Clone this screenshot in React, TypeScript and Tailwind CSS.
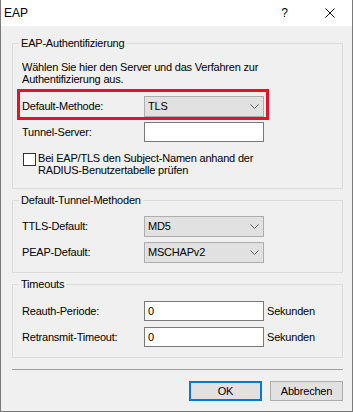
import React from 'react';

const Chevron = () => (
  <svg width="9" height="5" viewBox="0 0 9 5" className="shrink-0">
    <path d="M0.5 0.5 L4.5 4.5 L8.5 0.5" fill="none" stroke="#5a5a5a" strokeWidth="1" />
  </svg>
);

const Combo = ({ value }: { value: string }) => (
  <div className="flex h-[21px] w-[120px] items-center justify-between border border-[#adadad] bg-[#e1e1e1] pl-[3px] pr-[4px]">
    <span>{value}</span>
    <Chevron />
  </div>
);

const Input = ({ value = '' }: { value?: string }) => (
  <div className="flex h-[20px] w-[120px] items-center border border-[#7a7a7a] bg-white pl-[3px]">{value}</div>
);

const Group = ({ title, className, children }: { title: string; className?: string; children: React.ReactNode }) => (
  <fieldset className={`border border-[#dcdcdc] ${className ?? ''}`}>
    <legend className="ml-[6px] px-[2px] leading-[14px]">{title}</legend>
    {children}
  </fieldset>
);

const Row = ({ label, children }: { label: string; children: React.ReactNode }) => (
  <div className="flex items-center">
    <span className="w-[122px] shrink-0">{label}</span>
    {children}
  </div>
);

export default function App() {
  return (
    <div className="flex h-[412px] w-[353px] flex-col border-x border-b border-[#7a7a7a] bg-[#f0f0f0] font-['Liberation_Sans',Arial,sans-serif] text-[11px] tracking-[-0.2px] text-black">
      {/* Title bar */}
      <div className="flex h-[26px] shrink-0 items-center bg-white">
        <span className="pl-[3px] text-[12px] tracking-normal">EAP</span>
        <div className="flex-1" />
        <span className="w-[45px] text-center text-[12px]">?</span>
        <div className="flex w-[45px] items-center justify-center">
          <svg width="10" height="10" viewBox="0 0 10 10">
            <path d="M0.5 0.5 L9.5 9.5 M9.5 0.5 L0.5 9.5" stroke="#111" strokeWidth="1" />
          </svg>
        </div>
      </div>

      <div className="flex flex-col pl-[11px] pr-[9px]">
        <Group title="EAP-Authentifizierung" className="mt-[10px] pb-[12px]">
          <div className="pl-[9px] pt-[11px]">
            <div className="leading-[12px]">
              Wählen Sie hier den Server und das Verfahren zur
              <br />
              Authentifizierung aus.
            </div>

            <div className="relative mt-[11px] w-fit">
              <Row label="Default-Methode:">
                <Combo value="TLS" />
              </Row>
              {/* highlight */}
              <div className="pointer-events-none absolute -bottom-[3px] -left-[5px] -right-[5px] -top-[7px] border-[3px] border-[#e81123]" />
            </div>

            <div className="mt-[5px]">
              <Row label="Tunnel-Server:">
                <Input />
              </Row>
            </div>

            <div className="mt-[10px] flex items-start">
              <div className="ml-[1px] mt-[1px] h-[13px] w-[13px] shrink-0 border border-[#333] bg-white" />
              <div className="ml-[2px] leading-[12px]">
                Bei EAP/TLS den Subject-Namen anhand der
                <br />
                RADIUS-Benutzertabelle prüfen
              </div>
            </div>
          </div>
        </Group>

        <Group title="Default-Tunnel-Methoden" className="mt-[4px] pb-[9px]">
          <div className="flex flex-col gap-[5px] pl-[9px] pt-[9px]">
            <Row label="TTLS-Default:">
              <Combo value="MD5" />
            </Row>
            <Row label="PEAP-Default:">
              <Combo value="MSCHAPv2" />
            </Row>
          </div>
        </Group>

        <Group title="Timeouts" className="mt-[4px] pb-[10px]">
          <div className="flex flex-col gap-[6px] pl-[9px] pt-[10px]">
            <Row label="Reauth-Periode:">
              <Input value="0" />
              <span className="ml-[3px]">Sekunden</span>
            </Row>
            <Row label="Retransmit-Timeout:">
              <Input value="0" />
              <span className="ml-[3px]">Sekunden</span>
            </Row>
          </div>
        </Group>

        <div className="mt-[11px] h-px bg-[#a0a0a0]" />

        <div className="mt-[11px] flex justify-end gap-[8px]">
          <button className="h-[20px] w-[73px] border-2 border-[#0078d7] bg-[#e1e1e1]">OK</button>
          <button className="h-[20px] w-[73px] border border-[#adadad] bg-[#e1e1e1]">Abbrechen</button>
        </div>
      </div>
    </div>
  );
}
